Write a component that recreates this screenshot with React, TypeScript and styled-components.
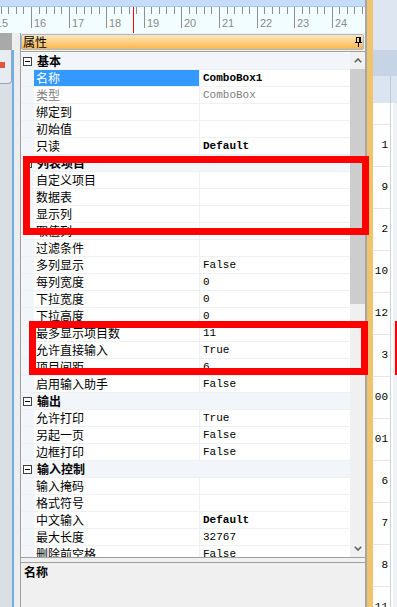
import React from 'react';
import styled, { createGlobalStyle } from 'styled-components';

const CJK = `"Noto Sans CJK SC", "Noto Sans", sans-serif`;
const MONO = `"Liberation Mono", "DejaVu Sans Mono", monospace`;

const GlobalStyle = createGlobalStyle`
  html, body { margin: 0; padding: 0; background: #f0f0f0; }
  body { width: 397px; height: 607px; overflow: hidden; font-family: ${CJK}; }
`;

type Prop = { kind: 'prop'; name: string; value?: string; bold?: boolean; dim?: boolean; selected?: boolean };
type Cat = { kind: 'cat'; name: string };
type Item = Prop | Cat;

const items: Item[] = [
  { kind: 'cat', name: '基本' },
  { kind: 'prop', name: '名称', value: 'ComboBox1', bold: true, selected: true },
  { kind: 'prop', name: '类型', value: 'ComboBox', dim: true },
  { kind: 'prop', name: '绑定到' },
  { kind: 'prop', name: '初始值' },
  { kind: 'prop', name: '只读', value: 'Default', bold: true },
  { kind: 'cat', name: '列表项目' },
  { kind: 'prop', name: '自定义项目' },
  { kind: 'prop', name: '数据表' },
  { kind: 'prop', name: '显示列' },
  { kind: 'prop', name: '取值列' },
  { kind: 'prop', name: '过滤条件' },
  { kind: 'prop', name: '多列显示', value: 'False' },
  { kind: 'prop', name: '每列宽度', value: '0' },
  { kind: 'prop', name: '下拉宽度', value: '0' },
  { kind: 'prop', name: '下拉高度', value: '0' },
  { kind: 'prop', name: '最多显示项目数', value: '11' },
  { kind: 'prop', name: '允许直接输入', value: 'True' },
  { kind: 'prop', name: '项目间距', value: '6' },
  { kind: 'prop', name: '启用输入助手', value: 'False' },
  { kind: 'cat', name: '输出' },
  { kind: 'prop', name: '允许打印', value: 'True' },
  { kind: 'prop', name: '另起一页', value: 'False' },
  { kind: 'prop', name: '边框打印', value: 'False' },
  { kind: 'cat', name: '输入控制' },
  { kind: 'prop', name: '输入掩码' },
  { kind: 'prop', name: '格式符号' },
  { kind: 'prop', name: '中文输入', value: 'Default', bold: true },
  { kind: 'prop', name: '最大长度', value: '32767' },
  { kind: 'prop', name: '删除前空格', value: 'False' },
];

const stripNumbers = ['1', '9', '2', '10', '12', '3', '00', '01', '6', '7', '8', '11'];

const Screen = styled.div`
  position: relative;
  width: 397px;
  height: 607px;
  overflow: hidden;
  display: flex;
  background: #f0f0f0;
`;

const MainColumn = styled.div`
  width: 365px;
  flex: none;
  display: flex;
  flex-direction: column;
`;

const RulerBox = styled.div`
  height: 33px;
  flex: none;
  svg { display: block; }
`;

const Body = styled.div`
  flex: 1;
  min-height: 0;
  display: flex;
`;

const Gutter = styled.div`
  width: 20px;
  flex: none;
  display: flex;
`;

const GutterStrip = styled.div`
  width: 12px;
  display: flex;
  flex-direction: column;
  background: #dadfe6;
`;

const GutterTop = styled.div`
  height: 17px;
  background: #a9a9a9;
`;

const GutterTab = styled.div`
  height: 34px;
  box-sizing: border-box;
  padding-top: 12px;
  background: #e7ecf3;
  border-right: 1px solid #9aa5b3;
  border-bottom: 1px solid #9aa5b3;
  border-bottom-right-radius: 4px;
`;

const RedMark = styled.div`
  width: 5px;
  height: 6px;
  background: #e0553c;
`;

const GutterLine = styled.div`
  width: 2px;
  margin-top: 17px;
  background: #6cb0e8;
`;

const GutterPad = styled.div`
  width: 6px;
  background: #ededed;
`;

const Panel = styled.div`
  width: 345px;
  box-sizing: border-box;
  border-left: 1px solid #a0a0a0;
  display: flex;
  flex-direction: column;
  background: #f0f0f0;
`;

const Header = styled.div`
  height: 16px;
  margin: 1px 1px 1px 0;
  box-sizing: border-box;
  border: 1px solid #9db9de;
  border-radius: 2px;
  background: linear-gradient(#ffe6b8 0%, #ffd18e 45%, #ffb548 100%);
  display: flex;
  align-items: center;
  justify-content: space-between;
  padding: 0 1px 0 1px;
  font-family: ${CJK};
  font-size: 12px;
  line-height: 14px;
  color: #000;
  svg { display: block; }
`;

const Grid = styled.div`
  height: 507px;
  flex: none;
  box-sizing: border-box;
  border-top: 1px solid #a0a0a0;
  border-bottom: 1px solid #a0a0a0;
  display: flex;
`;

const Rows = styled.div`
  width: 329px;
  padding-top: 1px;
  overflow: hidden;
  background: #fff;
`;

const PropRow = styled.div`
  display: grid;
  grid-template-columns: 13px 165px 151px;
  height: 17px;
  box-sizing: border-box;
  border-bottom: 1px solid #edf0f5;
`;

const ExpCell = styled.div`
  background: #f2f5fa;
  display: flex;
  align-items: center;
  padding-left: 2px;
`;

const NameCell = styled.div<{ $selected?: boolean; $dim?: boolean }>`
  padding-left: 2px;
  font-family: ${CJK};
  font-size: 12px;
  line-height: 16px;
  white-space: nowrap;
  overflow: hidden;
  background: ${(p) => (p.$selected ? '#3399ff' : '#fff')};
  color: ${(p) => (p.$selected ? '#fff' : p.$dim ? '#808080' : '#000')};
`;

const ValueCell = styled.div<{ $bold?: boolean; $dim?: boolean }>`
  border-left: 1px solid #edf0f5;
  padding-left: 3px;
  font-family: ${MONO};
  font-size: 11px;
  line-height: 16px;
  white-space: nowrap;
  overflow: hidden;
  font-weight: ${(p) => (p.$bold ? 700 : 400)};
  color: ${(p) => (p.$dim ? '#808080' : '#000')};
`;

const CatRow = styled.div`
  display: grid;
  grid-template-columns: 13px 1fr;
  height: 17px;
  box-sizing: border-box;
  border-bottom: 1px solid #edf0f5;
  background: #f2f5fa;
`;

const CatLabel = styled.div`
  padding-left: 3px;
  font-family: ${CJK};
  font-size: 12px;
  font-weight: 700;
  line-height: 16px;
  color: #000;
`;

const ExpBox = styled.div`
  width: 9px;
  height: 9px;
  box-sizing: border-box;
  border: 1px solid #404040;
  background: #fff;
  display: flex;
  align-items: center;
  justify-content: center;
`;

const ExpMinus = styled.div`
  width: 5px;
  height: 1px;
  background: #000;
`;

const ScrollBar = styled.div`
  width: 15px;
  display: flex;
  flex-direction: column;
  background: #f0f0f0;
`;

const ScrollBtn = styled.div`
  height: 17px;
  flex: none;
  display: flex;
  align-items: center;
  justify-content: center;
  svg { display: block; }
`;

const Thumb = styled.div`
  height: 235px;
  flex: none;
  background: #cdcdcd;
`;

const Track = styled.div`
  flex: 1;
`;

const DescPanel = styled.div`
  flex: 1;
  margin-top: 4px;
  border-top: 1px solid #a0a0a0;
  padding: 2px 3px;
  font-family: ${CJK};
  font-size: 12px;
  font-weight: 700;
  line-height: 14px;
  color: #000;
`;

const Splitter = styled.div`
  width: 8px;
  flex: none;
  box-sizing: border-box;
  border-left: 2px solid #a6a6a6;
  background: #f0c46c;
`;

const RightStrip = styled.div`
  width: 24px;
  flex: none;
  display: flex;
  flex-direction: column;
`;

const StripBlock = styled.div<{ $h: number; $bg: string }>`
  height: ${(p) => p.$h}px;
  flex: none;
  background: ${(p) => p.$bg};
  display: flex;
`;

const StripCol = styled.div<{ $bg: string }>`
  width: 18px;
  flex: none;
  box-sizing: border-box;
  border-right: 1px solid #bfcad8;
  background: ${(p) => p.$bg};
`;

const StripBody = styled.div`
  flex: 1;
  display: flex;
  min-height: 0;
`;

const NumCol = styled.div`
  width: 18px;
  flex: none;
  box-sizing: border-box;
  border-right: 1px solid #c9d2dd;
  background: #fff;
  padding-top: 21px;
`;

const NumCell = styled.div`
  height: 42px;
  box-sizing: border-box;
  border-top: 1px solid #e3e7ec;
  padding-right: 2px;
  text-align: right;
  font-family: ${MONO};
  font-size: 11px;
  line-height: 41px;
  color: #000;
  overflow: hidden;
  white-space: nowrap;
`;

const StripRest = styled.div`
  flex: 1;
  background: #eef2f7;
  border-left: 2px solid #fff;
  box-sizing: border-box;
`;

const RedBox = styled.div<{ $l: number; $t: number; $w: number; $h: number }>`
  position: absolute;
  left: ${(p) => p.$l}px;
  top: ${(p) => p.$t}px;
  width: ${(p) => p.$w}px;
  height: ${(p) => p.$h}px;
  box-sizing: border-box;
  border: 7px solid #ff0000;
  pointer-events: none;
`;

const RedEdge = styled.div`
  position: absolute;
  left: 395px;
  top: 321px;
  width: 2px;
  height: 54px;
  background: #ff0000;
`;

const Ruler: React.FC = () => {
  const els: React.ReactNode[] = [];
  for (let n = 15; n <= 25; n++) {
    for (let s = 0; s < 5; s++) {
      const x = 31 + (n - 16) * 37.6 + s * 7.52;
      if (x < 0 || x > 364) continue;
      const xr = Math.round(x) + 0.5;
      els.push(
        <line key={`${n}-${s}`} x1={xr} x2={xr} y1={7} y2={s === 0 ? 28 : 14} stroke="#8e8e8e" strokeWidth={1} />
      );
    }
    const lx = Math.round(31 + (n - 16) * 37.6) + 3;
    if (lx < 360 && lx > -15) {
      els.push(
        <text key={`t${n}`} x={lx} y={27} fontFamily='"Liberation Sans", sans-serif' fontSize={11} fill="#8a8a8a">
          {n}
        </text>
      );
    }
  }
  return (
    <RulerBox>
      <svg width={365} height={33} viewBox="0 0 365 33">
        <rect x={0} y={0} width={365} height={7} fill="#c5dcfa" />
        <rect x={0} y={6} width={365} height={1} fill="#a9c6ee" />
        <rect x={0} y={7} width={365} height={26} fill="#f2fdff" />
        {els}
        <rect x={133} y={7} width={1} height={26} fill="#ff0000" />
      </svg>
    </RulerBox>
  );
};

const Pin: React.FC = () => (
  <svg width={7} height={10} viewBox="0 0 7 10">
    <rect x={1.5} y={0.5} width={4} height={5} fill="none" stroke="#000" strokeWidth={1} />
    <rect x={4} y={1} width={1} height={4} fill="#000" />
    <rect x={0} y={5} width={7} height={1} fill="#000" />
    <rect x={3} y={6} width={1} height={4} fill="#000" />
  </svg>
);

const Chevron: React.FC<{ up?: boolean }> = ({ up }) => (
  <svg width={8} height={5} viewBox="0 0 8 5">
    <polyline
      points={up ? '0.8,4.2 4,1 7.2,4.2' : '0.8,0.8 4,4 7.2,0.8'}
      fill="none"
      stroke="#606060"
      strokeWidth={1.6}
    />
  </svg>
);

export default function App() {
  return (
    <>
      <GlobalStyle />
      <Screen>
        <MainColumn>
          <Ruler />
          <Body>
            <Gutter>
              <GutterStrip>
                <GutterTop />
                <GutterTab>
                  <RedMark />
                </GutterTab>
              </GutterStrip>
              <GutterLine />
              <GutterPad />
            </Gutter>
            <Panel>
              <Header>
                <span>属性</span>
                <Pin />
              </Header>
              <Grid>
                <Rows>
                  {items.map((it, i) =>
                    it.kind === 'cat' ? (
                      <CatRow key={i}>
                        <ExpCell>
                          <ExpBox>
                            <ExpMinus />
                          </ExpBox>
                        </ExpCell>
                        <CatLabel>{it.name}</CatLabel>
                      </CatRow>
                    ) : (
                      <PropRow key={i}>
                        <ExpCell />
                        <NameCell $selected={it.selected} $dim={it.dim}>
                          {it.name}
                        </NameCell>
                        <ValueCell $bold={it.bold} $dim={it.dim}>
                          {it.value ?? ''}
                        </ValueCell>
                      </PropRow>
                    )
                  )}
                </Rows>
                <ScrollBar>
                  <ScrollBtn>
                    <Chevron up />
                  </ScrollBtn>
                  <Thumb />
                  <Track />
                  <ScrollBtn>
                    <Chevron />
                  </ScrollBtn>
                </ScrollBar>
              </Grid>
              <DescPanel>名称</DescPanel>
            </Panel>
          </Body>
        </MainColumn>
        <Splitter />
        <RightStrip>
          <StripBlock $h={50} $bg="#dde6f1" />
          <StripBlock $h={26} $bg="#c7d4e5" />
          <StripBlock $h={27} $bg="#dbe5f1">
            <StripCol $bg="#dbe5f1" />
          </StripBlock>
          <StripBody>
            <NumCol>
              {stripNumbers.map((n, i) => (
                <NumCell key={i}>{n}</NumCell>
              ))}
            </NumCol>
            <StripRest />
          </StripBody>
        </RightStrip>
        <RedBox $l={23} $t={156} $w={346} $h={79} />
        <RedBox $l={29} $t={321} $w={339} $h={54} />
        <RedEdge />
      </Screen>
    </>
  );
}
